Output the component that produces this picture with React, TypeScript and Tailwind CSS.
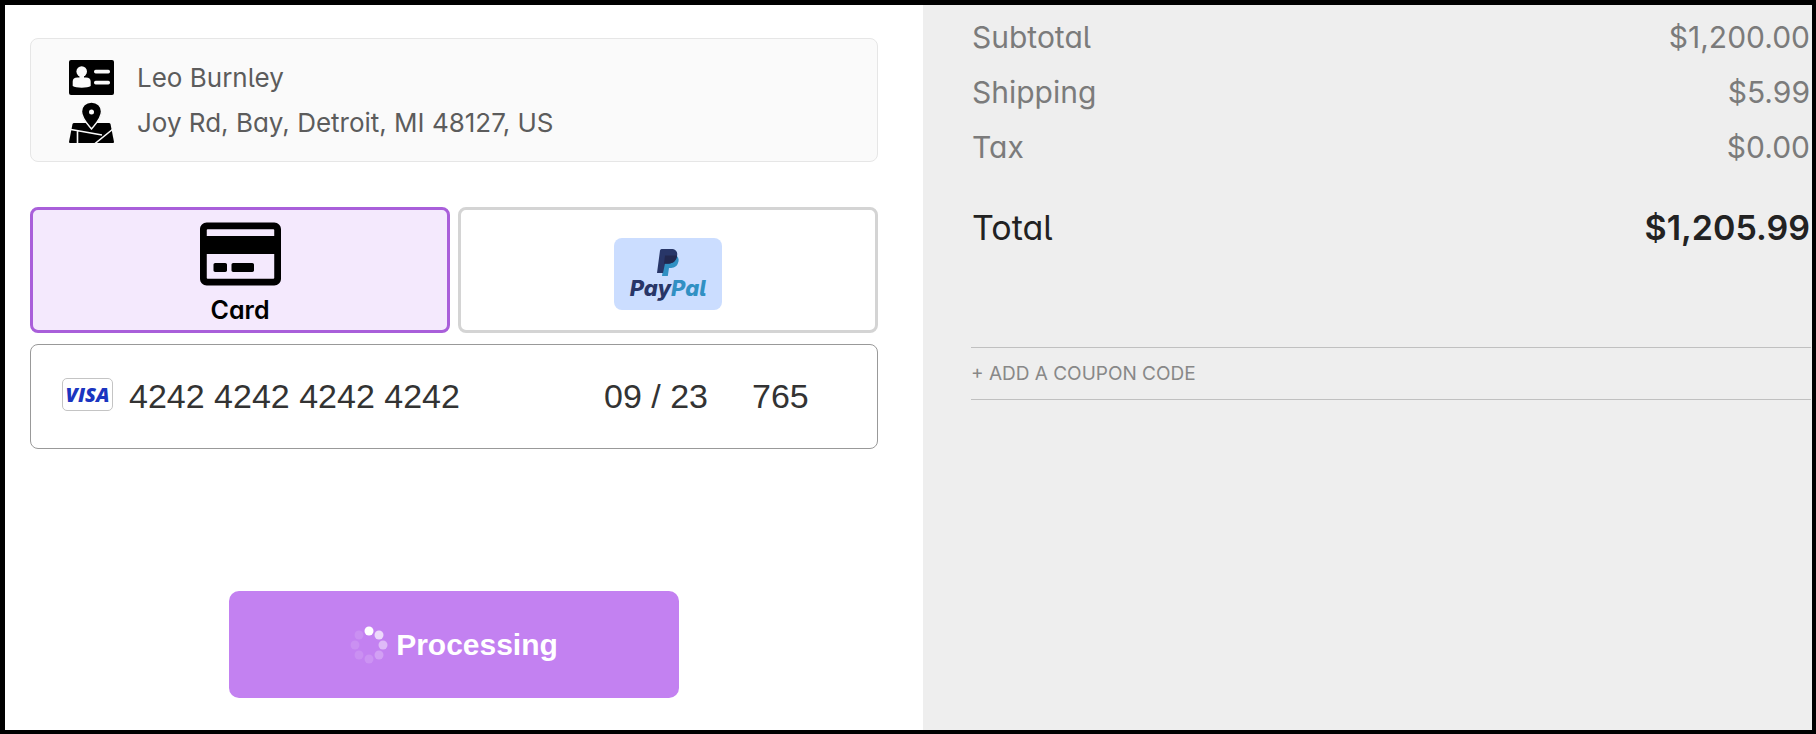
import { FaRegCreditCard } from "react-icons/fa";

const summaryRows = [
  { label: "Subtotal", value: "$1,200.00" },
  { label: "Shipping", value: "$5.99" },
  { label: "Tax", value: "$0.00" },
];

// Clockwise from the top, the brightest dot leads
const spinnerDots = [
  { cx: 19, cy: 5, opacity: 1 },
  { cx: 29, cy: 9, opacity: 0.7 },
  { cx: 33, cy: 19, opacity: 0.45 },
  { cx: 29, cy: 29, opacity: 0.25 },
  { cx: 19, cy: 33, opacity: 0.15 },
  { cx: 9, cy: 29, opacity: 0.12 },
  { cx: 5, cy: 19, opacity: 0.12 },
  { cx: 9, cy: 9, opacity: 0.12 },
];

function ContactIcon() {
  return (
    <svg viewBox="0 0 45 35" className="h-[35px] w-[45px]" aria-hidden="true">
      <rect width="45" height="35" rx="2" fill="#000" />
      <ellipse cx="12.7" cy="11.5" rx="5.3" ry="5.2" fill="#fafafa" />
      <path
        d="M10.5 15h4.500v2.500h2c3 0 4.700 1.500 4.700 4V26c-3 2.300-15 2.300-18 0v-4.500c0-2.500 1.700-4 4.700-4h2.100z"
        fill="#fafafa"
      />
      <rect x="25" y="9.7" width="16" height="3.8" rx="1.7" fill="#fafafa" />
      <rect x="25" y="20.7" width="16" height="3.8" rx="1.7" fill="#fafafa" />
    </svg>
  );
}

function MapIcon() {
  return (
    <svg viewBox="0 0 45 41" className="h-[41px] w-[45px]" aria-hidden="true">
      <path
        d="M5 21H40Q41 21 41.500 22L45 40Q45 41 44 41H1Q0 41 0 40L3.500 22Q4 21 5 21Z"
        fill="#000"
      />
      <path
        d="M2 27.500L33 33M44 27L26 41.500M8.500 28.500V41"
        stroke="#fafafa"
        strokeWidth="1.6"
        fill="none"
      />
      <path
        d="M22.500 0C28.500 0 32.500 4.200 32.500 9.500C32.500 16 27 21.500 22.500 27C18 21.500 12.500 16 12.500 9.500C12.500 4.200 16.500 0 22.500 0Z"
        fill="#000"
        stroke="#fafafa"
        strokeWidth="1.4"
      />
      <circle cx="22.5" cy="10" r="2.5" fill="#fafafa" />
    </svg>
  );
}

function PayPalBadge() {
  return (
    <span className="flex h-[72px] w-[108px] flex-col items-center justify-center rounded-lg bg-[#cbddff]">
      <svg viewBox="0 0 22 27" className="h-[27px] w-[22px]" aria-hidden="true">
        <path
          d="M8 7h12c2 2 2 5 1 7c-1 4-5 5-8 5h-1l-1.200 8H5z"
          fill="#3090c3"
        />
        <path
          d="M4.500 0H14c5 0 7 3 6 7c-1 5-4 7.500-9 7.500H8L6 24H0L3 1.500Q3.300 0 4.500 0z"
          fill="#283668"
        />
        <path d="M8 6.500h12.100c-.6 5-4 8.200-9 8.200H7z" fill="#22284f" />
      </svg>
      <span className="text-[22px] leading-6 font-extrabold text-[#283668] italic">
        Pay<span className="text-[#3090c3]">Pal</span>
      </span>
    </span>
  );
}

function VisaBadge() {
  return (
    <span className="mb-1 flex h-[33px] w-[51px] shrink-0 items-center justify-center rounded-[5px] border border-[#c4c4c4] bg-white font-['Open_Sans',sans-serif] text-xl leading-none font-extrabold text-[#1a35c0] italic">
      VISA
    </span>
  );
}

function Spinner() {
  return (
    <svg viewBox="0 0 38 38" className="size-[38px]" aria-hidden="true">
      {spinnerDots.map((dot, i) => (
        <circle
          key={i}
          cx={dot.cx}
          cy={dot.cy}
          r="4.5"
          fill="#fff"
          fillOpacity={dot.opacity}
        />
      ))}
    </svg>
  );
}

function PaymentPanel() {
  return (
    <main className="pt-[33px] pr-[45px] pb-8 pl-[25px]">
      <section className="flex flex-col gap-[7px] rounded-lg border border-[#e6e6e6] bg-[#fafafa] pt-[21px] pb-[18px] pl-[38px] text-[26px] leading-[35px] text-[#5c5c5c]">
        <div className="flex items-center gap-[23px]">
          <ContactIcon />
          <p>Leo Burnley</p>
        </div>
        <div className="flex items-center gap-[23px]">
          <MapIcon />
          <p>Joy Rd, Bay, Detroit, MI 48127, US</p>
        </div>
      </section>

      <div className="mt-[45px] grid grid-cols-2 gap-2">
        <button
          type="button"
          aria-pressed="true"
          className="flex h-[126px] flex-col items-center justify-center rounded-lg border-3 border-[#a95fda] bg-[#f4e9fd] pt-0.5 text-[25px] leading-7 font-semibold text-black"
        >
          <FaRegCreditCard className="h-[72px] w-[81px]" />
          <span className="mt-1.5">Card</span>
        </button>
        <button
          type="button"
          aria-pressed="false"
          aria-label="PayPal"
          className="flex h-[126px] items-center justify-center rounded-lg border-3 border-[#d4d4d4] bg-white pt-2"
        >
          <PayPalBadge />
        </button>
      </div>

      <div className="mt-[11px] flex h-[105px] items-center rounded-lg border border-[#999] bg-white pl-[31px] font-['Liberation_Sans',Arial,sans-serif] text-[34px] text-[#333]">
        <VisaBadge />
        <input
          aria-label="Card number"
          defaultValue="4242 4242 4242 4242"
          className="ml-4 min-w-0 flex-1 outline-none"
        />
        <input
          aria-label="Expiry date"
          defaultValue="09 / 23"
          className="w-[148px] outline-none"
        />
        <input
          aria-label="CVC"
          defaultValue="765"
          className="w-[125px] outline-none"
        />
      </div>

      <button
        type="button"
        className="mx-auto mt-[142px] flex h-[107px] w-[450px] max-w-full items-center justify-center gap-2 rounded-[10px] bg-[#c381f1] font-['Liberation_Sans',Arial,sans-serif] text-[30px] font-bold text-white"
      >
        <Spinner />
        Processing
      </button>
    </main>
  );
}

function SummaryPanel() {
  return (
    <aside className="bg-[#eee] pt-[5px] pl-12 text-[#7b7b7b]">
      <dl className="pr-0.5 pl-px text-[30px]">
        {summaryRows.map((row) => (
          <div
            key={row.label}
            className="flex h-[55px] items-center justify-between"
          >
            <dt>{row.label}</dt>
            <dd>{row.value}</dd>
          </div>
        ))}
        <div className="mt-6 flex h-14 items-center justify-between text-[34px] text-[#222]">
          <dt>Total</dt>
          <dd className="font-semibold">{"$1,205.99"}</dd>
        </div>
      </dl>
      <div className="pr-px">
        <button
          type="button"
          className="mt-[92px] flex h-[53px] w-full items-center border-y border-[#c0c0c0] pt-0.5 text-[19px] text-[#888]"
        >
          + ADD A COUPON CODE
        </button>
      </div>
    </aside>
  );
}

export default function App() {
  return (
    <div className="grid min-h-screen grid-cols-[918fr_889fr] border-t-5 border-r-4 border-b-4 border-l-5 border-black bg-white font-['Inter',sans-serif] [font-feature-settings:'cv11','cv05']">
      <PaymentPanel />
      <SummaryPanel />
    </div>
  );
}
